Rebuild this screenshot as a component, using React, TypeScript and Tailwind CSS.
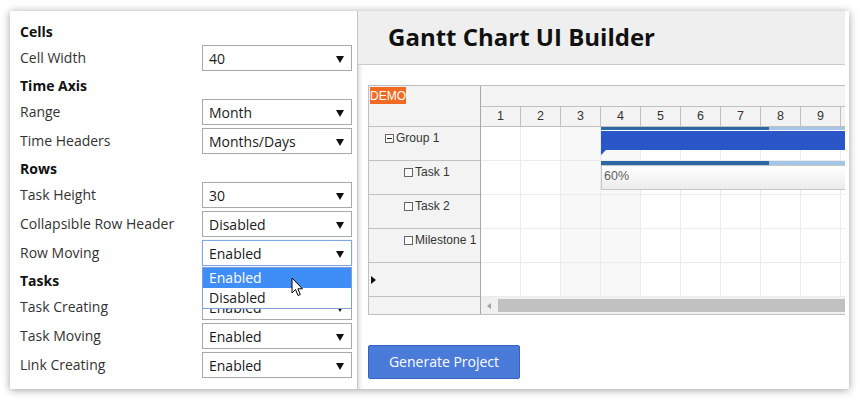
import React from "react";

type Field = { label: string; value: string; open?: boolean };
type Section = { title: string; fields: Field[] };

const sections: Section[] = [
  { title: "Cells", fields: [{ label: "Cell Width", value: "40" }] },
  {
    title: "Time Axis",
    fields: [
      { label: "Range", value: "Month" },
      { label: "Time Headers", value: "Months/Days" },
    ],
  },
  {
    title: "Rows",
    fields: [
      { label: "Task Height", value: "30" },
      { label: "Collapsible Row Header", value: "Disabled" },
      { label: "Row Moving", value: "Enabled", open: true },
    ],
  },
  {
    title: "Tasks",
    fields: [
      { label: "Task Creating", value: "Enabled" },
      { label: "Task Moving", value: "Enabled" },
      { label: "Link Creating", value: "Enabled" },
    ],
  },
];

function Arrow() {
  return (
    <svg width="8" height="7" viewBox="0 0 8 7" className="absolute right-[7px] top-[10px]">
      <polygon points="0,0 8,0 4,7" fill="#111" />
    </svg>
  );
}

function Cursor() {
  return (
    <svg width="13" height="21" viewBox="0 0 13 21" className="absolute left-[88px] top-[9px]">
      <path
        d="M1 1 L1 16 L4.5 12.5 L7 18.5 L9.3 17.5 L6.9 11.8 L11.5 11.8 Z"
        fill="#fff"
        stroke="#000"
        strokeWidth="1"
        strokeLinejoin="miter"
      />
    </svg>
  );
}

function Select({ value, open }: { value: string; open?: boolean }) {
  return (
    <div className="relative w-[150px]">
      <div
        className={
          open
            ? "relative h-[26px] border border-[#7fa4e2] shadow-[0_0_1px_#9fbef0] bg-white pl-[6px] flex items-center text-[14px] text-[#1a1a1a]"
            : "relative h-[26px] border border-[#a9a9a9] bg-white pl-[6px] flex items-center text-[14px] text-[#1a1a1a]"
        }
      >
        <span className="leading-none pt-[2px]">{value}</span>
        <Arrow />
      </div>
      {open && (
        <div className="absolute left-0 top-[27px] z-10 w-[150px] border border-[#7f9fd6] bg-white text-[14px]">
          <div className="h-[20px] bg-[#3f8df6] text-white pl-[6px] flex items-center leading-none">Enabled</div>
          <div className="h-[20px] text-[#1a1a1a] pl-[6px] flex items-center leading-none">Disabled</div>
          <Cursor />
        </div>
      )}
    </div>
  );
}

function LeftPanel() {
  return (
    <div className="w-[347px] shrink-0 bg-white pt-[6px] pl-[10px] pr-[5px] font-['Open_Sans',sans-serif]">
      {sections.map((s) => (
        <div key={s.title}>
          <div className="h-[28px] flex items-center text-[14px] font-bold text-[#111]">{s.title}</div>
          <div className="flex flex-col gap-[3px]">
            {s.fields.map((f) => (
              <div key={f.label} className="flex items-center justify-between h-[26px]">
                <span className="text-[14px] text-[#333] pb-[2px]">{f.label}</span>
                <Select value={f.value} open={f.open} />
              </div>
            ))}
          </div>
        </div>
      ))}
    </div>
  );
}

const days = [1, 2, 3, 4, 5, 6, 7, 8, 9, 10];
const rows = ["Group 1", "Task 1", "Task 2", "Milestone 1", ""];

function RowHeader({ name, idx }: { name: string; idx: number }) {
  if (!name) {
    return (
      <div className="h-[34px] border-b border-[#c0c0c0] bg-[#f3f3f3] relative">
        <svg width="5" height="8" viewBox="0 0 5 8" className="absolute left-[2px] top-[13px]">
          <polygon points="0,0 5,4 0,8" fill="#111" />
        </svg>
      </div>
    );
  }
  const group = idx === 0;
  return (
    <div
      className={
        group
          ? "h-[34px] border-b border-[#c0c0c0] bg-[#f3f3f3] pl-[16px] pt-[4px] flex items-start"
          : "h-[34px] border-b border-[#c0c0c0] bg-[#f3f3f3] pl-[35px] pt-[4px] flex items-start"
      }
    >
      <div className="w-[9px] h-[9px] border border-[#666] bg-[#fafafa] mt-[3px] mr-[2px] flex items-center justify-center">
        {group && <div className="w-[5px] h-[1px] bg-[#222]" />}
      </div>
      <span className="text-[12px] text-[#333] leading-[15px]">{name}</span>
    </div>
  );
}

function Gantt() {
  return (
    <div className="flex border-t border-l border-b border-[#c0c0c0] w-[600px] font-['Liberation_Sans',sans-serif]">
      {/* row headers */}
      <div className="w-[112px] shrink-0 border-r border-[#a8a8a8] flex flex-col">
        <div className="h-[41px] border-b border-[#c0c0c0] bg-[#f3f3f3] pl-[1px] pt-[1px]">
          <div className="w-[36px] h-[17px] bg-[#f26a21] text-white text-[12px] flex items-center justify-center leading-none">
            DEMO
          </div>
        </div>
        {rows.map((r, i) => (
          <RowHeader key={i} name={r} idx={i} />
        ))}
        <div className="h-[17px] bg-[#f3f3f3]" />
      </div>
      {/* chart */}
      <div className="flex-1 flex flex-col">
        <div className="h-[21px] border-b border-[#c0c0c0] bg-[#f3f3f3]" />
        <div className="h-[20px] border-b border-[#c0c0c0] bg-[#f3f3f3] flex">
          {days.map((d) => (
            <div
              key={d}
              className="w-[40px] shrink-0 border-r border-[#c0c0c0] flex items-center justify-center text-[12.5px] text-[#333]"
            >
              {d}
            </div>
          ))}
        </div>
        <div className="relative">
          {rows.map((_, i) => (
            <div key={i} className="h-[34px] flex">
              {days.map((d) => (
                <div
                  key={d}
                  className={
                    d === 3 || d === 4
                      ? "w-[40px] shrink-0 border-r border-b border-[#ebebeb] bg-[#f8f8f8]"
                      : "w-[40px] shrink-0 border-r border-b border-[#ebebeb] bg-white"
                  }
                />
              ))}
            </div>
          ))}
          {/* group bar */}
          <div className="absolute left-[120px] top-0 w-[280px]">
            <div className="h-[3px] flex">
              <div className="w-[168px] bg-[#2c67a6]" />
              <div className="flex-1 bg-[#a3c6e6]" />
            </div>
            <div className="h-[1px] bg-white" />
            <div className="h-[19px] bg-[#2b56c8]" />
            <svg width="5" height="5" viewBox="0 0 5 5" className="block">
              <polygon points="0,0 5,0 0,5" fill="#2b56c8" />
            </svg>
          </div>
          {/* task 1 bar */}
          <div className="absolute left-[120px] top-[34px] w-[280px]">
            <div className="h-[4px] flex">
              <div className="w-[168px] bg-[#2c67a6]" />
              <div className="flex-1 bg-[#a3c6e6]" />
            </div>
            <div className="h-[25px] border border-[#c6c6c6] bg-gradient-to-b from-white to-[#ececec] pl-[2px] pt-[3px] text-[12.5px] text-[#606060] leading-[14px]">
              60%
            </div>
          </div>
        </div>
        <div className="h-[17px] bg-[#f0f0f0] relative">
          <svg width="4" height="6" viewBox="0 0 4 6" className="absolute left-[6px] top-[6px]">
            <polygon points="4,0 4,6 0,3" fill="#a3a3a3" />
          </svg>
          <div className="absolute left-[17px] top-[2px] right-0 h-[13px] bg-[#c1c1c1]" />
        </div>
      </div>
    </div>
  );
}

function RightPanel() {
  return (
    <div className="flex-1 min-w-0 bg-white pr-[4px] flex flex-col">
      <div className="flex-1 overflow-hidden flex flex-col shadow-[inset_5px_0_5px_-4px_rgba(0,0,0,0.18)]">
        <div className="h-[54px] shrink-0 bg-[#efefef] border-b border-[#cccccc] flex items-center pl-[30px]">
          <h1 className="font-['Open_Sans',sans-serif] font-bold text-[24px] text-[#111] leading-none pb-[2px]">
            Gantt Chart UI Builder
          </h1>
        </div>
        <div className="pt-[20px] pl-[10px]">
          <Gantt />
          <button className="mt-[30px] w-[152px] h-[34px] bg-[#4b7bd9] border border-[#3562c6] rounded-[2px] text-white text-[14px] font-['Open_Sans',sans-serif] flex items-center justify-center pb-[1px]">
            Generate Project
          </button>
        </div>
      </div>
    </div>
  );
}

export default function App() {
  return (
    <div className="w-[860px] h-[400px] bg-white pt-[11px] pl-[10px]">
      <div className="w-[839px] h-[378px] bg-white flex shadow-[0_1px_8px_rgba(0,0,0,0.38)]">
        <LeftPanel />
        <div className="w-[1px] bg-[#c4c4c4]" />
        <RightPanel />
      </div>
    </div>
  );
}
